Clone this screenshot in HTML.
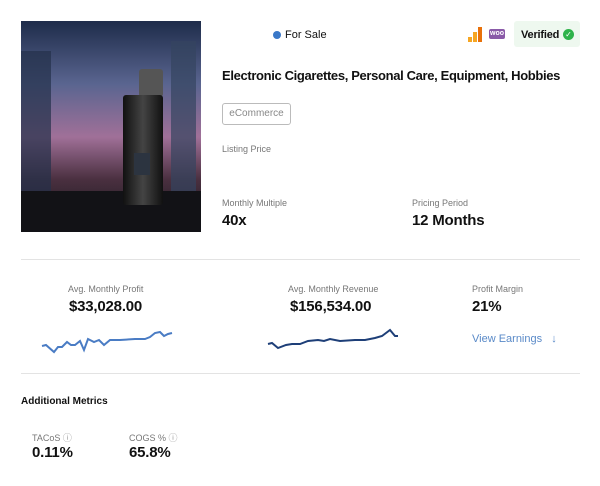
<!DOCTYPE html>
<html><head><style>
*{margin:0;padding:0;box-sizing:border-box}
body{width:600px;height:486px;background:#fff;font-family:"Liberation Sans",sans-serif;color:#111;position:relative;overflow:hidden}
.a{position:absolute;white-space:nowrap}
.lbl{font-size:9px;color:#777}
.val{font-size:15px;font-weight:bold;color:#111;letter-spacing:-0.2px}
</style></head><body>
<div class="a" style="left:21px;top:21px;width:180px;height:211px;background:linear-gradient(180deg,#1e2c4a 0%,#5a6590 30%,#a07098 55%,#4a3040 75%,#141418 100%);overflow:hidden">
 <div style="position:absolute;left:0;top:30px;width:30px;height:150px;background:#24304a;opacity:.7"></div>
 <div style="position:absolute;left:150px;top:20px;width:25px;height:160px;background:#34445f;opacity:.7"></div>
 <div style="position:absolute;left:0;top:170px;width:180px;height:41px;background:#121216"></div>
 <div style="position:absolute;left:118px;top:48px;width:24px;height:28px;background:#555;border-radius:3px"></div>
 <div style="position:absolute;left:102px;top:74px;width:40px;height:110px;background:linear-gradient(90deg,#111,#444,#111);border-radius:3px"></div>
 <div style="position:absolute;left:113px;top:132px;width:16px;height:22px;background:#2c3440"></div>
</div>
<div class="a" style="left:273px;top:31px;width:8px;height:8px;border-radius:50%;background:#3a78c8"></div>
<div class="a" style="left:285px;top:29px;font-size:11px">For Sale</div>
<svg class="a" style="left:467px;top:27px" width="16" height="16"><rect x="1" y="10" width="4" height="5" fill="#f6a623"/><rect x="6" y="5" width="4" height="10" fill="#f6a623"/><rect x="11" y="0" width="4" height="15" fill="#e8710a"/></svg>
<div class="a" style="left:489px;top:29px;width:16px;height:10px;background:#8a5aa8;border-radius:2px;color:#fff;font-size:7px;font-weight:bold;text-align:center;line-height:10px">woo</div>
<div class="a" style="left:514px;top:21px;width:66px;height:26px;background:#eef8ef;border-radius:3px"></div>
<div class="a" style="left:521px;top:29px;font-size:11px;font-weight:bold;letter-spacing:-0.2px">Verified</div>
<div class="a" style="left:563px;top:29px;width:11px;height:11px;border-radius:50%;background:#2eb34a;color:#fff;font-size:8px;text-align:center;line-height:11px">✓</div>
<div class="a" style="left:222px;top:68px;font-size:13px;font-weight:bold;letter-spacing:-0.35px">Electronic Cigarettes, Personal Care, Equipment, Hobbies</div>
<div class="a" style="left:222px;top:103px;width:69px;height:22px;border:1px solid #bbb;border-radius:3px;font-size:10px;color:#888;text-align:center;line-height:20px">eCommerce</div>
<div class="a lbl" style="left:222px;top:144px">Listing Price</div>
<div class="a lbl" style="left:222px;top:198px">Monthly Multiple</div>
<div class="a val" style="left:222px;top:212px">40x</div>
<div class="a lbl" style="left:412px;top:198px">Pricing Period</div>
<div class="a val" style="left:412px;top:212px">12 Months</div>
<div class="a" style="left:21px;top:259px;width:559px;height:1px;background:#e3e3e3"></div>
<div class="a lbl" style="left:68px;top:284px">Avg. Monthly Profit</div>
<div class="a val" style="left:69px;top:298px">$33,028.00</div>
<div class="a lbl" style="left:288px;top:284px">Avg. Monthly Revenue</div>
<div class="a val" style="left:290px;top:298px">$156,534.00</div>
<div class="a lbl" style="left:472px;top:284px">Profit Margin</div>
<div class="a val" style="left:472px;top:298px">21%</div>
<div class="a" style="left:472px;top:333px;font-size:11px;color:#5a8ac8">View Earnings &nbsp;&nbsp;↓</div>
<svg class="a" style="left:0;top:0" width="600" height="486"><polyline fill="none" stroke="#4a7cc4" stroke-width="2" points="42,346 46,345 54,352 58,347 62,347 67,342 71,345 75,345 80,341 84,350 88,339 94,342 99,340 104,345 110,340 120,340 135,339 145,339 150,337 155,333 160,332 164,336 168,334 172,333"/><polyline fill="none" stroke="#1e3f78" stroke-width="2" points="268,344 272,343 278,348 286,345 292,344 300,344 308,341 318,340 324,341 330,339 340,341 355,340 365,340 375,338 382,336 390,330 395,336 398,336"/></svg>
<div class="a" style="left:21px;top:373px;width:559px;height:1px;background:#e3e3e3"></div>
<div class="a" style="left:21px;top:396px;font-size:10px;font-weight:bold">Additional Metrics</div>
<div class="a lbl" style="left:32px;top:431px">TACoS <span style="color:#999">ⓘ</span></div>
<div class="a val" style="left:32px;top:444px">0.11%</div>
<div class="a lbl" style="left:129px;top:431px">COGS % <span style="color:#999">ⓘ</span></div>
<div class="a val" style="left:129px;top:444px">65.8%</div>
</body></html>
